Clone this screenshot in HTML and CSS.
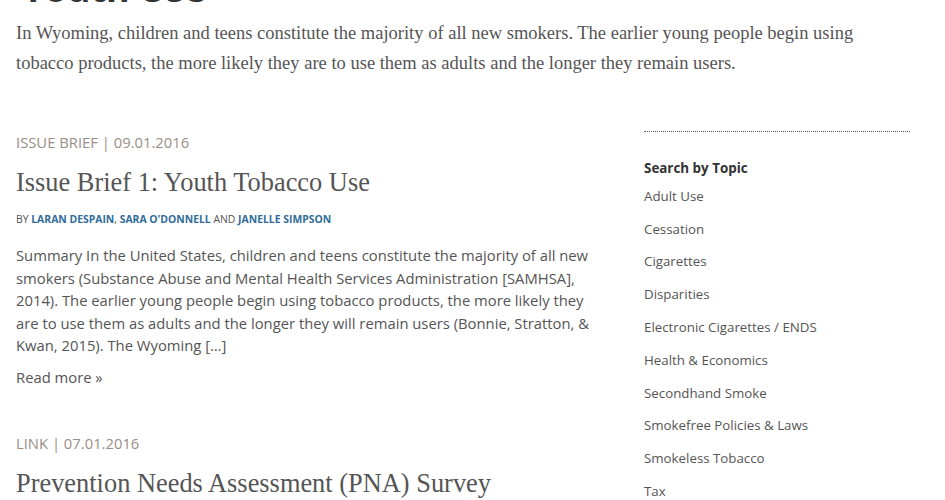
FILE: index.html
```html
<!DOCTYPE html>
<html>
<head>
<meta charset="utf-8">
<link rel="stylesheet" href="styles.css">
</head>
<body>
<div class="page">
  <header class="intro">
    <h1 class="page-title">Youth Use</h1>
    <p class="lede">In Wyoming, children and teens constitute the majority of all new smokers. The earlier young people begin using tobacco products, the more likely they are to use them as adults and the longer they remain users.</p>
  </header>
  <div class="layout">
    <main class="posts">
      <article class="post">
        <div class="meta">ISSUE BRIEF | 09.01.2016</div>
        <h2 class="post-title">Issue Brief 1: Youth Tobacco Use</h2>
        <div class="byline">BY <a href="#">LARAN DESPAIN</a>, <a href="#">SARA O'DONNELL</a> AND <a href="#">JANELLE SIMPSON</a></div>
        <p class="summary">Summary In the United States, children and teens constitute the majority of all new smokers (Substance Abuse and Mental Health Services Administration [SAMHSA], 2014). The earlier young people begin using tobacco products, the more likely they are to use them as adults and the longer they will remain users (Bonnie, Stratton, &amp; Kwan, 2015). The Wyoming […]</p>
        <a class="more" href="#">Read more »</a>
      </article>
      <article class="post">
        <div class="meta">LINK | 07.01.2016</div>
        <h2 class="post-title">Prevention Needs Assessment (PNA) Survey</h2>
      </article>
    </main>
    <aside class="sidebar">
      <h3 class="side-title">Search by Topic</h3>
      <ul class="topics">
        <li><a href="#">Adult Use</a></li>
        <li><a href="#">Cessation</a></li>
        <li><a href="#">Cigarettes</a></li>
        <li><a href="#">Disparities</a></li>
        <li><a href="#">Electronic Cigarettes / ENDS</a></li>
        <li><a href="#">Health &amp; Economics</a></li>
        <li><a href="#">Secondhand Smoke</a></li>
        <li><a href="#">Smokefree Policies &amp; Laws</a></li>
        <li><a href="#">Smokeless Tobacco</a></li>
        <li><a href="#">Tax</a></li>
      </ul>
    </aside>
  </div>
</div>
</body>
</html>
```

FILE: styles.css
```css
html, body {
  margin: 0;
  padding: 0;
  background: #fff;
  overflow: hidden;
}
.page {
  padding: 0 16px;
  color: #555;
  font-family: "Open Sans", sans-serif;
}
.page-title {
  font-family: "Open Sans", sans-serif;
  font-weight: 700;
  font-size: 36px;
  line-height: 45px;
  color: #333;
  margin: -34px 0 0 6px;
}
.lede {
  font-family: "Liberation Serif", serif;
  font-size: 18.5px;
  line-height: 30px;
  color: #555;
  max-width: 860px;
  margin: 7px 0 0 0;
}
.layout {
  display: flex;
  gap: 44px;
  margin-top: 54px;
}
.posts {
  width: 584px;
  flex: none;
}
.post {
  margin-bottom: 45px;
}
.meta {
  font-size: 14.8px;
  line-height: 20px;
  color: #9a8e86;
}
.post-title {
  font-family: "Liberation Serif", serif;
  font-weight: 400;
  font-size: 26.4px;
  line-height: 32px;
  color: #555;
  margin: 14px 0 0 0;
}
.byline {
  font-size: 10.4px;
  line-height: 14px;
  color: #555;
  margin-top: 14px;
}
.byline a {
  color: #2f6c99;
  font-weight: 700;
  text-decoration: none;
}
.summary {
  font-size: 14.8px;
  line-height: 22.5px;
  color: #555;
  margin: 18px 0 9px 0;
}
.more {
  font-size: 14.8px;
  color: #555;
  text-decoration: none;
}
.sidebar {
  width: 266px;
  flex: none;
  border-top: 1px dotted #555;
  margin-top: -1px;
}
.side-title {
  font-size: 13.4px;
  font-weight: 700;
  color: #333;
  margin: 26px 0 0 0;
  line-height: 20px;
}
.topics {
  list-style: none;
  margin: -5px 0 0 0;
  padding: 0;
}
.topics li {
  font-size: 13.3px;
  line-height: 20px;
  margin-top: 12.8px;
}
.topics a {
  color: #555;
  text-decoration: none;
}
```
